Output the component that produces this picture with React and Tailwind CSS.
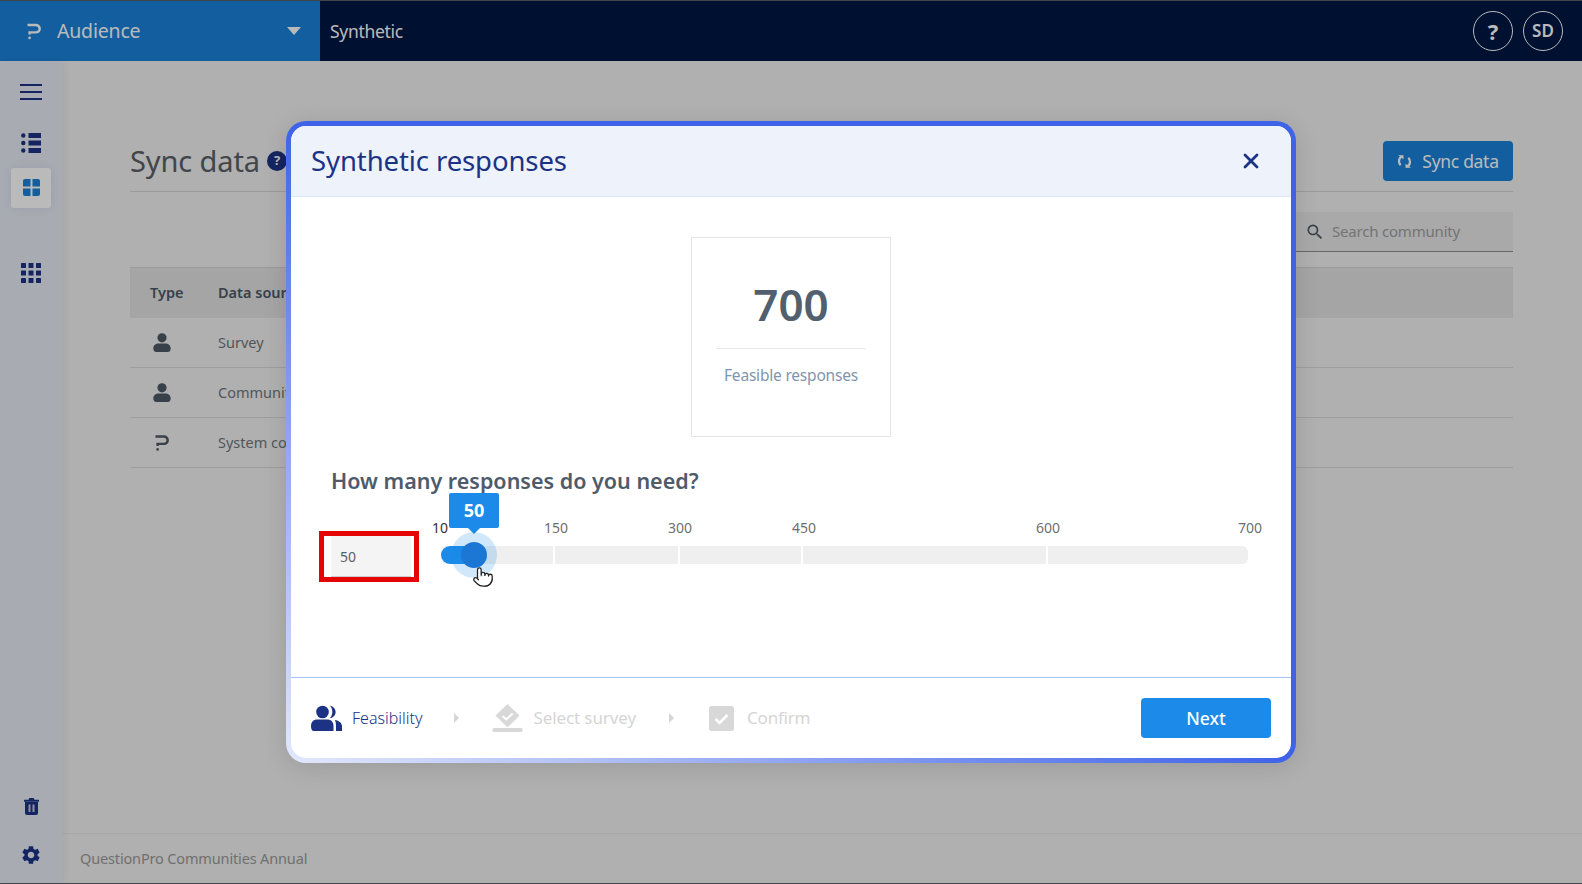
import React from "react";
import { X, Pointer } from "lucide-react";
import { MdSearch, MdSettings } from "react-icons/md";

const font = { fontFamily: '"Noto Sans", sans-serif' };

function QLogo({ className }) {
  return (
    <svg viewBox="0 0 14 16" className={className} fill="none">
      <path d="M0.5 1.5H9a3.7 3.7 0 0 1 0 7.4H2.6V11" stroke="currentColor" strokeWidth="2.4" />
      <rect x="1.3" y="13" width="2.6" height="2.8" rx="1.2" fill="currentColor" />
    </svg>
  );
}

function Person({ className }) {
  return (
    <svg viewBox="0 0 18 19" className={className} fill="currentColor">
      <circle cx="9" cy="4.8" r="4.6" />
      <path d="M0.3 15.5C0.3 12.2 3 10.6 5.5 10.6h7c2.5 0 5.2 1.6 5.2 4.9 0 2-1 3.4-3 3.4H3.3c-2 0-3-1.4-3-3.4z" />
    </svg>
  );
}

function People({ className }) {
  return (
    <svg viewBox="0 0 31 26" className={className} fill="currentColor">
      <circle cx="11.5" cy="7" r="6.3" />
      <path d="M19 .8c3.4.6 5.6 3.1 5.6 6.2s-2.2 5.6-5.6 6.2c1.5-1.7 2.3-3.8 2.3-6.2S20.500 2.500 19 .8z" />
      <path d="M0 21c0-4.500 3-6.500 6-6.500h10.500c3 0 6 2 6 6.500v5H2.500C1 26 0 24 0 21z" />
      <path d="M24 15c4 .8 7 2.700 7 6.500V26h-6v-5.500c0-2-.3-3.800-1-5.500z" />
    </svg>
  );
}

function VoteIcon({ className }) {
  return (
    <svg viewBox="0 0 31 28" className={className}>
      <path d="M15.500 0.500 27 11.500 17 21.500a2 2 0 0 1-3 0L4 11.500z" fill="currentColor" strokeLinejoin="round" stroke="currentColor" strokeWidth="1" />
      <path d="M10.500 12l3.700 3.500 6.500-6" fill="none" stroke="#fff" strokeWidth="2" />
      <rect x="0.500" y="24" width="30" height="4" rx="1.500" fill="currentColor" />
    </svg>
  );
}

function CheckBox({ className }) {
  return (
    <svg viewBox="0 0 25 25" className={className}>
      <rect width="25" height="25" rx="2.500" fill="currentColor" />
      <path d="M6.500 13l4 4 8-8" fill="none" stroke="#fff" strokeWidth="2.600" />
    </svg>
  );
}

function ListIcon({ className }) {
  return (
    <svg viewBox="0 0 20 20" className={className} fill="currentColor">
      <circle cx="2.300" cy="2.500" r="2.200" />
      <circle cx="2.300" cy="10" r="2.200" />
      <circle cx="2.300" cy="17.500" r="2.200" />
      <rect x="7.500" y="0" width="12.500" height="5" />
      <rect x="7.500" y="7.500" width="12.500" height="5" />
      <rect x="7.500" y="15" width="12.500" height="5" />
    </svg>
  );
}

function TilesIcon({ className }) {
  return (
    <svg viewBox="0 0 17 17" className={className} fill="currentColor">
      <path d="M2 0h5.500v7.500H0V2a2 2 0 0 1 2-2z" />
      <path d="M9.500 0H15a2 2 0 0 1 2 2v5.500H9.500z" />
      <path d="M0 9.500h7.500V17H2a2 2 0 0 1-2-2z" />
      <path d="M9.500 9.500H17V15a2 2 0 0 1-2 2H9.500z" />
    </svg>
  );
}

function AppsIcon({ className }) {
  const cells = [0, 7.5, 15];
  return (
    <svg viewBox="0 0 20 20" className={className} fill="currentColor">
      {cells.map((y) => cells.map((x) => <rect key={`${x}-${y}`} x={x} y={y} width="5" height="5" rx="0.500" />))}
    </svg>
  );
}

function TrashIcon({ className }) {
  return (
    <svg viewBox="0 0 15 17" className={className}>
      <path d="M0 1.800h4.500L5.300 0h4.400l.8 1.800H15v2H0z" fill="currentColor" />
      <path d="M1 4h13v11a2 2 0 0 1-2 2H3a2 2 0 0 1-2-2z" fill="currentColor" />
      <rect x="4.500" y="6.500" width="2" height="7.500" fill="#c4c8d0" />
      <rect x="8.500" y="6.500" width="2" height="7.500" fill="#c4c8d0" />
    </svg>
  );
}

function SyncIcon({ className }) {
  return (
    <svg viewBox="0 0 15 15" className={className} fill="none" stroke="currentColor" strokeWidth="2.200">
      <path d="M5.500 2.200C3 3 2 5 2 7c0 1.600.6 3 1.600 4.200" />
      <path d="M9.500 12.800C12 12 13 10 13 8c0-1.600-.6-3-1.600-4.200" />
      <path d="M1 1.200h5.500v4z" fill="currentColor" stroke="none" />
      <path d="M14 13.800H8.500v-4z" fill="currentColor" stroke="none" />
    </svg>
  );
}

function Row({ icon, label }) {
  return (
    <div className="flex h-[50px] items-center border-b border-[#d9d9d9]">
      <div className="flex w-[88px] justify-center pr-[24px] text-[#4d5866]">{icon}</div>
      <span className="text-[14.500px] text-[#6f7780]">{label}</span>
    </div>
  );
}

const segments = ["w-[112px]", "w-[123px]", "w-[121px]", "w-[243px]", "w-[200px]"];
const marks = [
  { v: "10", c: "left-[-1px] text-[#333333]" },
  { v: "150", c: "left-[115px] text-[#6f6f6f]" },
  { v: "300", c: "left-[239px] text-[#6f6f6f]" },
  { v: "450", c: "left-[363px] text-[#6f6f6f]" },
  { v: "600", c: "left-[607px] text-[#6f6f6f]" },
  { v: "700", c: "left-[809px] text-[#6f6f6f]" },
];

export default function App() {
  return (
    <div className="relative flex h-[884px] w-[1582px] flex-col overflow-hidden bg-[#5a5f66] py-px" style={font}>
      <header className="flex h-[60px] shrink-0 items-center bg-[#001642]">
        <div className="flex h-full w-[320px] items-center bg-[#1a82da] pl-[27px] pr-[19px] text-white">
          <QLogo className="h-[17px] w-[14px]" />
          <span className="ml-[16px] flex-1 text-[19.500px] tracking-[-0.2px]">Audience</span>
          <span className="h-0 w-0 border-x-[7px] border-t-[8px] border-x-transparent border-t-white" />
        </div>
        <span className="ml-[10px] flex-1 text-[17.500px] tracking-[-0.3px] text-white">Synthetic</span>
        <div className="flex gap-[10px] pr-[19px]">
          <span className="flex h-[40px] w-[40px] items-center justify-center rounded-full border border-white text-[22px] font-bold text-white">?</span>
          <span className="flex h-[40px] w-[40px] items-center justify-center rounded-full border border-white text-[17px] font-semibold text-white">SD</span>
        </div>
      </header>

      <div className="flex min-h-0 flex-1 rounded-bl-[5px] bg-[#f1f1f1]">
        <aside className="z-10 flex w-[62px] shrink-0 flex-col items-center bg-[#e7ecf4] pt-[23px] text-[#1c3385] shadow-[2px_0_8px_rgba(0,0,0,0.06)]">
          <div className="flex w-[22px] flex-col gap-[5.500px]">
            <span className="h-[1.500px] bg-current" />
            <span className="h-[1.500px] bg-current" />
            <span className="h-[1.500px] bg-current" />
          </div>
          <ListIcon className="mt-[33px] h-[20px] w-[20px]" />
          <div className="mt-[15px] flex h-[40px] w-[40px] items-center justify-center rounded-[3px] bg-white shadow-[0_0_12px_rgba(28,51,133,0.1)]">
            <TilesIcon className="h-[17px] w-[17px] text-[#1a82da]" />
          </div>
          <AppsIcon className="mt-[55px] h-[20px] w-[20px]" />
          <div className="flex-1" />
          <TrashIcon className="h-[17px] w-[15px]" />
          <MdSettings className="mb-[17px] mt-[29px] h-[22px] w-[22px]" />
        </aside>

        <main className="flex min-w-0 flex-1 flex-col">
          <div className="flex flex-1 flex-col pl-[68px] pr-[69px] pt-[80px]">
            <div className="flex h-[51px] items-start border-b border-[#d4d4d4]">
              <h1 className="text-[29px] leading-[40px] tracking-[-0.1px] text-[#5a6068]">Sync data</h1>
              <span className="ml-[7px] mt-[10px] flex h-[20px] w-[20px] items-center justify-center rounded-full bg-[#1c3385] text-[13px] font-bold text-white">?</span>
              <div className="flex-1" />
              <button className="flex h-[40px] w-[130px] items-center justify-center gap-[10px] rounded-[4px] bg-[#1a82da] text-[17.500px] tracking-[-0.3px] text-white">
                <SyncIcon className="h-[15px] w-[15px]" />
                Sync data
              </button>
            </div>
            <div className="mt-[20px] flex justify-end">
              <div className="flex h-[40px] w-[228px] items-center border-b border-[#8e8e8e] bg-[#e8e8e8] pl-[20px] text-[15px] text-[#9f9f9f]">
                <MdSearch className="h-[20px] w-[20px] text-[#4d5866]" />
                <span className="ml-[7px] tracking-[-0.2px]">Search community</span>
              </div>
            </div>
            <div className="mt-[15px] flex h-[51px] items-center border-t border-[#d4d4d4] bg-[#e2e2e2] pl-[20px] text-[14.500px] font-semibold text-[#4d5866]">
              <span className="w-[68px]">Type</span>
              <span>Data source</span>
            </div>
            <Row icon={<Person className="h-[19px] w-[18px]" />} label="Survey" />
            <Row icon={<Person className="h-[19px] w-[18px]" />} label="Community" />
            <Row icon={<QLogo className="h-[16px] w-[14px]" />} label="System configured" />
          </div>
          <footer className="flex h-[50px] items-center border-t border-[#e6e6e6] pl-[18px] text-[14.500px] tracking-[-0.15px] text-[#9a9a9a]">
            QuestionPro Communities Annual
          </footer>
        </main>
      </div>

      <div className="absolute inset-0 z-20 flex items-center justify-center bg-black/[0.27]">
        <div className="h-[642px] w-[1010px] rounded-[20px] bg-[linear-gradient(to_top_right,#e3e8fb_0%,#3f63e8_50%)] p-[5px] shadow-[0_4px_24px_rgba(0,0,0,0.12)]">
          <div className="flex h-full flex-col overflow-hidden rounded-[15px] bg-white">
            <div className="flex h-[71px] shrink-0 items-center justify-between border-b border-[#dde6f8] bg-[#edf2fb] pl-[20px] pr-[28px]">
              <h2 className="text-[27.500px] tracking-[-0.1px] text-[#1c3385]">Synthetic responses</h2>
              <X className="h-[24px] w-[24px] text-[#1c3385]" strokeWidth={2.800} />
            </div>

            <div className="flex min-h-0 flex-1 flex-col">
              <div className="mt-[40px] flex h-[200px] w-[200px] flex-col items-center self-center border border-[#e5e5e5] px-[24px] pt-[36px]">
                <span className="text-[44px] font-semibold leading-[60px] text-[#525f6e]">700</span>
                <span className="mt-[14px] h-px w-[150px] bg-[#e8e8e8]" />
                <span className="mt-[15px] text-[15.500px] tracking-[-0.2px] text-[#7f95ae]">Feasible responses</span>
              </div>

              <h3 className="ml-[40px] mt-[29px] text-[21.500px] font-semibold leading-[30px] text-[#4f5b6b]">How many responses do you need?</h3>

              <div className="ml-[28px] mt-[35px] flex items-start">
                <div className="h-[51px] w-[100px] border-[5px] border-[#e60505] pl-[7px] pr-[3px]">
                  <div className="flex h-full items-center border-b border-[#cccccc] bg-[#f4f4f4] pl-[9px] text-[14px] text-[#5a5f66]">50</div>
                </div>
                <div className="relative ml-[22px] mt-[15px] h-[18px] w-[807px]">
                  <div className="flex h-full gap-[2px] overflow-hidden rounded-[6px]">
                    {segments.map((w) => (
                      <span key={w} className={`${w} bg-[#efefef]`} />
                    ))}
                  </div>
                  {marks.map((m) => (
                    <span key={m.v} className={`absolute top-[-28px] -translate-x-1/2 text-[14px] leading-[20px] ${m.c}`}>
                      {m.v}
                    </span>
                  ))}
                  <span className="absolute left-0 top-0 h-[18px] w-[36px] rounded-l-full bg-[#1b8ae9]" />
                  <span className="absolute left-[10px] top-[-14px] h-[46px] w-[46px] rounded-full bg-[#1b8ae9]/20" />
                  <span className="absolute left-[20px] top-[-4px] h-[26px] w-[26px] rounded-full bg-[#1b76d4]" />
                  <span className="absolute left-[8px] top-[-53px] flex h-[35px] w-[50px] items-center justify-center rounded-[2px] bg-[#1b8ae9] text-[18px] font-bold text-white">50</span>
                  <span className="absolute left-[27px] top-[-18px] h-0 w-0 border-x-[6px] border-t-[6px] border-x-transparent border-t-[#1b8ae9]" />
                  <Pointer className="absolute left-[31px] top-[18px] h-[26px] w-[22px] fill-white text-[#222222]" strokeWidth={1.400} />
                </div>
              </div>

              <div className="mt-auto flex h-[81px] items-center border-t border-[#a9c1fb] pl-[20px] pr-[20px]">
                <People className="h-[26px] w-[31px] text-[#1c3385]" />
                <span className="ml-[10px] text-[16px] font-light text-[#1c3385]">Feasibility</span>
                <span className="ml-[32px] h-0 w-0 border-y-[5px] border-l-[5px] border-y-transparent border-l-[#d5d5d5]" />
                <VoteIcon className="ml-[33px] h-[28px] w-[31px] text-[#d8d8d8]" />
                <span className="ml-[10px] text-[17px] tracking-[-0.1px] text-[#d5d5d5]">Select survey</span>
                <span className="ml-[33px] h-0 w-0 border-y-[5px] border-l-[5px] border-y-transparent border-l-[#d5d5d5]" />
                <CheckBox className="ml-[35px] h-[25px] w-[25px] text-[#d8d8d8]" />
                <span className="ml-[13px] text-[17px] tracking-[-0.2px] text-[#d5d5d5]">Confirm</span>
                <div className="flex-1" />
                <button className="h-[40px] w-[130px] rounded-[4px] bg-[#1b8ae9] text-[17.500px] font-medium text-white">Next</button>
              </div>
            </div>
          </div>
        </div>
      </div>
    </div>
  );
}
